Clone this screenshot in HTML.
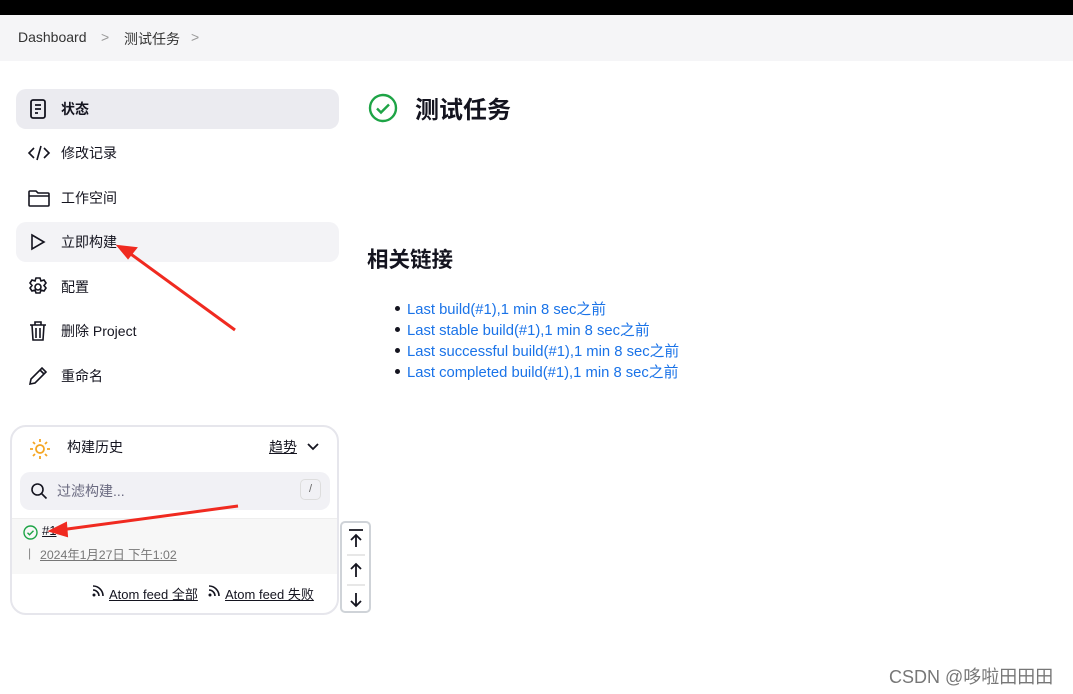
<!DOCTYPE html>
<html><head><meta charset="utf-8"><style>
*{box-sizing:border-box;margin:0;padding:0}
body{width:1073px;height:694px;overflow:hidden;background:#fff;font-family:"Liberation Sans","Noto Sans CJK SC",sans-serif;color:#14141f;position:relative;font-size:14px}
.top{position:absolute;left:0;top:0;width:1073px;height:15px;background:#000}
.bc{position:absolute;left:0;top:15px;width:1073px;height:46px;background:#f5f5f7;font-size:14px;color:#333}
.bc span{position:absolute;top:14px}
.item{position:absolute;left:16px;width:323px;height:40px;border-radius:10px;font-size:14px}
.item svg{position:absolute;left:11px;top:9px}
.item .t{position:absolute;left:45px;top:10px}
.a{position:absolute}
ul{position:absolute;left:407px;top:298px;list-style:none}
li{height:21px;font-size:14.8px;color:#1a73e8;position:relative}
li:before{content:"";position:absolute;left:-12px;top:8px;width:5px;height:5px;border-radius:50%;background:#14141f}
u{text-decoration:underline}
</style></head><body>
<div class="top"></div>
<div class="bc"><span style="left:18px">Dashboard</span><span style="left:101px;color:#999">&gt;</span><span style="left:124px">测试任务</span><span style="left:191px;color:#999">&gt;</span></div>

<div class="item" style="top:89px;background:#ebebf0"><svg width="22" height="22" viewBox="0 0 22 22" fill="none" stroke="#14141f" stroke-width="1.8"><rect x="4" y="2" width="14" height="18" rx="2"/><path d="M8 7h6M8 11h6M8 15h3"/></svg><span class="t" style="font-weight:bold">状态</span></div>
<div class="item" style="top:133px"><svg width="24" height="22" viewBox="0 0 24 22" fill="none" stroke="#14141f" stroke-width="1.6"><path d="M7 6l-5 5 5 5M17 6l5 5-5 5M14 4l-4 14"/></svg><span class="t">修改记录</span></div>
<div class="item" style="top:178px"><svg width="24" height="22" viewBox="0 0 24 22" fill="none" stroke="#14141f" stroke-width="1.6"><path d="M2 5a1 1 0 0 1 1-1h6l2 2h10a1 1 0 0 1 1 1v11a1 1 0 0 1-1 1H3a1 1 0 0 1-1-1z M2 9h20"/></svg><span class="t">工作空间</span></div>
<div class="item" style="top:222px;background:#f3f3f6"><svg width="22" height="22" viewBox="0 0 22 22" fill="none" stroke="#14141f" stroke-width="1.6"><path d="M5 4l12 7-12 7z"/></svg><span class="t">立即构建</span></div>
<div class="item" style="top:267px"><svg width="22" height="22" viewBox="0 0 22 22" fill="none" stroke="#14141f" stroke-width="1.6"><circle cx="11" cy="11" r="3"/><path d="M9 2h4l1 3 3-1 2 3-2 2.5 2 2.5-2 3-3-1-1 3H9l-1-3-3 1-2-3 2-2.5L3 7l2-3 3 1z"/></svg><span class="t">配置</span></div>
<div class="item" style="top:311px"><svg width="22" height="22" viewBox="0 0 22 22" fill="none" stroke="#14141f" stroke-width="1.6"><path d="M3 5h16M8 5V2h6v3M5 5l1 15h10l1-15M9 8v10M13 8v10"/></svg><span class="t">删除 Project</span></div>
<div class="item" style="top:356px"><svg width="22" height="22" viewBox="0 0 22 22" fill="none" stroke="#14141f" stroke-width="1.6"><path d="M3 19l1-5L15 3l4 4L8 18z M13 5l4 4"/></svg><span class="t">重命名</span></div>

<div class="a" style="left:10px;top:425px;width:329px;height:190px;border:2px solid #e6e6ec;border-radius:16px;overflow:hidden">
 <svg class="a" style="left:17px;top:11px" width="22" height="22" viewBox="0 0 22 22" fill="none" stroke="#f5a623" stroke-width="1.8"><circle cx="11" cy="11" r="4"/><path d="M11 1v3M11 18v3M1 11h3M18 11h3M4 4l2 2M16 16l2 2M4 18l2-2M16 6l2-2"/></svg>
 <span class="a" style="left:55px;top:10px">构建历史</span>
 <span class="a" style="left:257px;top:10px"><u>趋势</u></span>
 <svg class="a" style="left:295px;top:16px" width="12" height="8" viewBox="0 0 12 8" fill="none" stroke="#14141f" stroke-width="1.8"><path d="M1 1l5 5 5-5"/></svg>
 <div class="a" style="left:8px;top:45px;width:310px;height:38px;background:#f1f1f5;border-radius:10px">
  <svg class="a" style="left:10px;top:10px" width="18" height="18" viewBox="0 0 18 18" fill="none" stroke="#14141f" stroke-width="1.6"><circle cx="7.5" cy="7.5" r="5.5"/><path d="M11.5 11.5l5 5"/></svg>
  <span class="a" style="left:37px;top:9px;color:#6a6a80">过滤构建...</span>
  <div class="a" style="left:280px;top:7px;width:21px;height:21px;border:1px solid #ddd;border-radius:5px;font-size:11px;color:#666;text-align:center;line-height:19px">/</div>
 </div>
 <div class="a" style="left:0;top:91px;width:329px;height:56px;background:#f7f7f7;border-top:1px solid #eee"></div>
 <svg class="a" style="left:11px;top:98px" width="15" height="15" viewBox="0 0 15 15" fill="none" stroke="#1ea446" stroke-width="1.4"><circle cx="7.5" cy="7.5" r="6.5"/><path d="M4.5 7.8l2 2 4-4"/></svg>
 <span class="a" style="left:30px;top:96px;font-size:13px"><u>#1</u></span>
 <span class="a" style="left:16px;top:119px;font-size:12px;color:#888">|</span>
 <span class="a" style="left:28px;top:118px;font-size:12.3px;color:#777"><u>2024年1月27日 下午1:02</u></span>
 <svg class="a" style="left:79px;top:157px" width="14" height="14" viewBox="0 0 14 14" fill="none" stroke="#14141f" stroke-width="1.6"><path d="M2 6a6 6 0 0 1 6 6M2 2a10 10 0 0 1 10 10"/><circle cx="3" cy="11" r="1.5" fill="#14141f" stroke="none"/></svg>
 <span class="a" style="left:97px;top:157px;font-size:13px"><u>Atom feed 全部</u></span>
 <svg class="a" style="left:195px;top:157px" width="14" height="14" viewBox="0 0 14 14" fill="none" stroke="#14141f" stroke-width="1.6"><path d="M2 6a6 6 0 0 1 6 6M2 2a10 10 0 0 1 10 10"/><circle cx="3" cy="11" r="1.5" fill="#14141f" stroke="none"/></svg>
 <span class="a" style="left:213px;top:157px;font-size:13px"><u>Atom feed 失败</u></span>
</div>
<div class="a" style="left:340px;top:521px;width:31px;height:92px;border:2px solid #cfd3d8;border-radius:5px;background:#fff">
 <svg class="a" style="left:5px;top:4px" width="18" height="84" viewBox="0 0 18 84" fill="none" stroke="#14141f" stroke-width="1.8"><path d="M2 3h14M9 20V8M4 13l5-5 5 5M9 50V37M4 42l5-5 5 5M9 66v13M4 74l5 5 5-5"/><path d="M-3 28h24M-3 58h24" stroke="#e4e4e4"/></svg>
</div>

<svg class="a" style="left:368px;top:93px" width="30" height="30" viewBox="0 0 30 30" fill="none" stroke="#1ea446" stroke-width="2.4"><circle cx="15" cy="15" r="13"/><path d="M9 15.5l4 4 8-8"/></svg>
<div class="a" style="left:415px;top:90px;font-size:24px;font-weight:bold">测试任务</div>
<div class="a" style="left:367px;top:243px;font-size:21.5px;font-weight:bold">相关链接</div>
<ul>
<li>Last build(#1),1 min 8 sec之前</li>
<li>Last stable build(#1),1 min 8 sec之前</li>
<li>Last successful build(#1),1 min 8 sec之前</li>
<li>Last completed build(#1),1 min 8 sec之前</li>
</ul>

<svg class="a" style="left:0;top:0" width="1073" height="694"><g stroke="#f02a20" stroke-width="2" fill="#f02a20"><path d="M235 330L128 252" stroke-width="3"/><path d="M118 246l18 2-8 10z"/><path d="M238 506L60 530" stroke-width="3"/><path d="M50 531l16-8 1 13z"/></g></svg>
<div class="a" style="left:889px;top:663px;font-size:18px;color:#777">CSDN @哆啦田田田</div>
</body></html>
